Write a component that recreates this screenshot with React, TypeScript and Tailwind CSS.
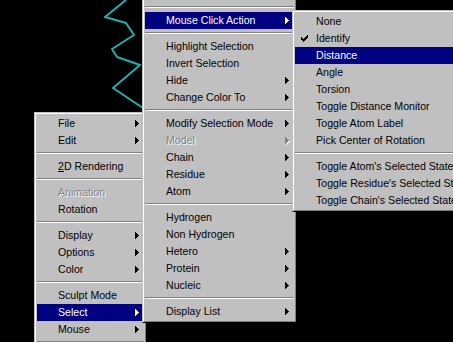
import React from 'react';

type Item = {
  label?: React.ReactNode;
  arrow?: boolean;
  disabled?: boolean;
  active?: boolean;
  checked?: boolean;
  sep?: boolean;
  blank?: boolean;
};

const fileMenu: Item[] = [
  { label: 'File', arrow: true },
  { label: 'Edit', arrow: true },
  { sep: true },
  { label: <><u>2</u>D Rendering</> },
  { sep: true },
  { label: 'Animation', disabled: true },
  { label: 'Rotation' },
  { sep: true },
  { label: 'Display', arrow: true },
  { label: 'Options', arrow: true },
  { label: 'Color', arrow: true },
  { sep: true },
  { label: 'Sculpt Mode' },
  { label: 'Select', arrow: true, active: true },
  { label: 'Mouse', arrow: true },
  { sep: true },
];

const selectMenu: Item[] = [
  { blank: true },
  { sep: true },
  { label: 'Mouse Click Action', arrow: true, active: true },
  { sep: true },
  { label: 'Highlight Selection' },
  { label: 'Invert Selection' },
  { label: 'Hide', arrow: true },
  { label: 'Change Color To', arrow: true },
  { sep: true },
  { label: 'Modify Selection Mode', arrow: true },
  { label: 'Model', arrow: true, disabled: true },
  { label: 'Chain', arrow: true },
  { label: 'Residue', arrow: true },
  { label: 'Atom', arrow: true },
  { sep: true },
  { label: 'Hydrogen' },
  { label: 'Non Hydrogen' },
  { label: 'Hetero', arrow: true },
  { label: 'Protein', arrow: true },
  { label: 'Nucleic', arrow: true },
  { sep: true },
  { label: 'Display List', arrow: true },
];

const clickMenu: Item[] = [
  { label: 'None' },
  { label: 'Identify', checked: true },
  { label: 'Distance', active: true },
  { label: 'Angle' },
  { label: 'Torsion' },
  { label: 'Toggle Distance Monitor' },
  { label: 'Toggle Atom Label' },
  { label: 'Pick Center of Rotation' },
  { sep: true },
  { label: "Toggle Atom's Selected State" },
  { label: "Toggle Residue's Selected State" },
  { label: "Toggle Chain's Selected State" },
];

function Arrow({ color }: { color: string }) {
  return (
    <svg width="4" height="7" viewBox="0 0 4 7" shapeRendering="crispEdges" className="block">
      <rect x="0" y="0" width="1" height="7" fill={color} />
      <rect x="1" y="1" width="1" height="5" fill={color} />
      <rect x="2" y="2" width="1" height="3" fill={color} />
      <rect x="3" y="3" width="1" height="1" fill={color} />
    </svg>
  );
}

function Check() {
  const px = [
    [6, 0], [5, 1], [6, 1], [0, 2], [4, 2], [5, 2], [6, 2],
    [0, 3], [1, 3], [3, 3], [4, 3], [5, 3],
    [0, 4], [1, 4], [2, 4], [3, 4], [4, 4],
    [1, 5], [2, 5], [3, 5], [2, 6],
  ];
  return (
    <svg width="7" height="7" viewBox="0 0 7 7" shapeRendering="crispEdges" className="block">
      {px.map(([x, y]) => <rect key={`${x}-${y}`} x={x} y={y} width="1" height="1" fill="#000" />)}
    </svg>
  );
}

function Menu({ items, className }: { items: Item[]; className: string }) {
  return (
    <div className={`absolute border border-t-[#c0c0c0] border-l-[#c0c0c0] border-r-black border-b-black bg-[#c0c0c0] p-[2px] shadow-[inset_1px_1px_0_#fff,inset_-1px_-1px_0_#808080] ${className}`}>
      {items.map((item, i) => {
        if (item.sep) {
          return (
            <div key={i} className="h-[9px] pt-[3px]">
              <div className="h-px bg-[#808080]" />
              <div className="h-px bg-white" />
            </div>
          );
        }
        if (item.blank) return <div key={i} className="h-[17px]" />;
        const text = item.active ? 'text-white' : item.disabled ? 'text-[#808080] [text-shadow:1px_1px_0_#fff]' : 'text-black';
        return (
          <div key={i} className={`flex h-[17px] items-center whitespace-nowrap leading-[17px] ${item.active ? 'bg-[#000080]' : ''} ${text}`}>
            <div className="flex w-[21px] shrink-0 pl-[6px]">{item.checked && <Check />}</div>
            <span>{item.label}</span>
            <div className="flex-1" />
            {item.arrow && (
              <div className="mr-[5px] flex items-center">
                {item.disabled ? (
                  <div className="relative">
                    <div className="absolute left-px top-px"><Arrow color="#fff" /></div>
                    <div className="relative"><Arrow color="#808080" /></div>
                  </div>
                ) : (
                  <Arrow color={item.active ? '#fff' : '#000'} />
                )}
              </div>
            )}
          </div>
        );
      })}
    </div>
  );
}

export default function App() {
  return (
    <div className="relative h-[342px] w-[453px] overflow-hidden bg-black font-['Liberation_Sans',Arial,sans-serif] text-[10.6px]">
      <svg width="453" height="342" className="absolute left-0 top-0">
        <polyline
          points="126,0 105,17 126,23 134,35 112,49 117,57 140,65 113,88 146,110"
          fill="none"
          stroke="#1fb0b0"
          strokeWidth="2"
          strokeLinejoin="round"
        />
      </svg>
      <Menu items={fileMenu} className="left-[34px] top-[112px] w-[113px]" />
      <Menu items={selectMenu} className="left-[142px] top-[-17px] w-[155px]" />
      <Menu items={clickMenu} className="left-[292px] top-[10px] w-[220px]" />
    </div>
  );
}
